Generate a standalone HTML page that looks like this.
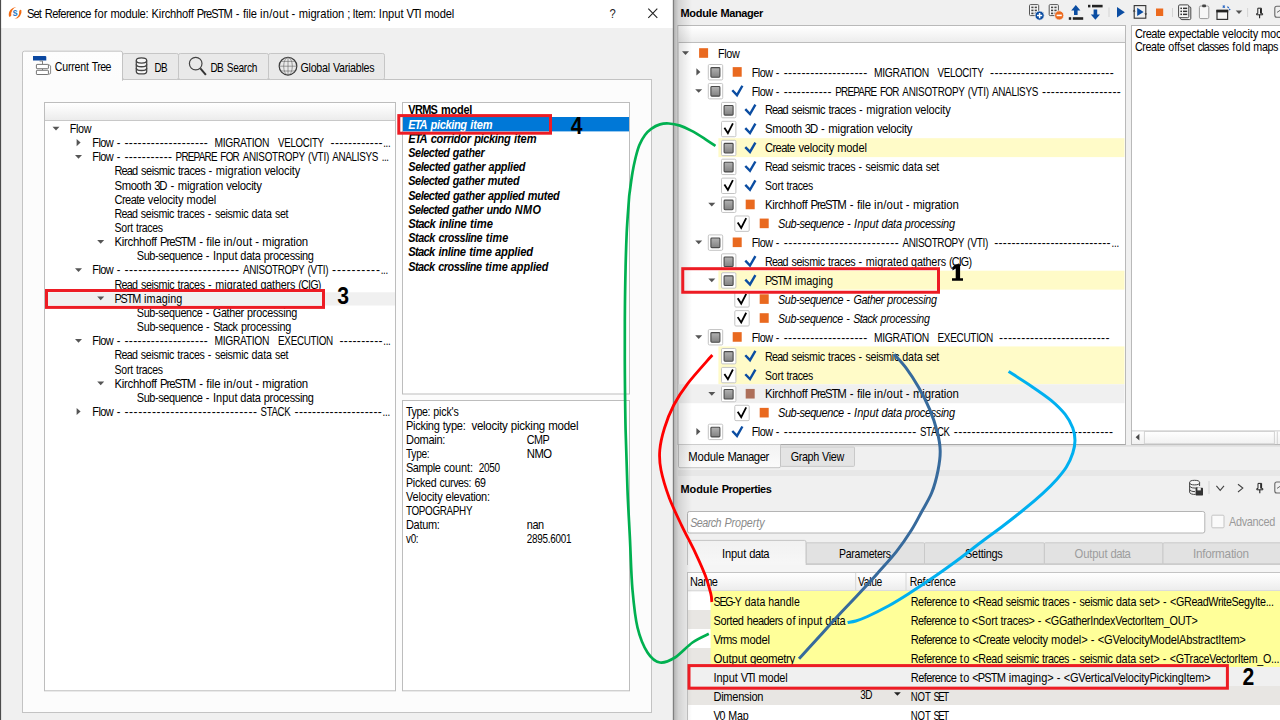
<!DOCTYPE html>
<html lang="en"><head><meta charset="utf-8"><title>Set Reference - Module Manager</title>
<style>
html,body{margin:0;padding:0;background:#f0f0f0;overflow:hidden}
body{width:1280px;height:720px;font-family:"Liberation Sans",sans-serif}
svg{display:block;position:absolute;left:0;top:0}
svg text{font-family:"Liberation Sans",sans-serif;white-space:pre}
</style></head><body>
<svg width="1280" height="720" viewBox="0 0 1280 720">
<defs>
<linearGradient id="ghead" x1="0" y1="0" x2="0" y2="1"><stop offset="0" stop-color="#ffffff"/><stop offset="0.45" stop-color="#f7f7f7"/><stop offset="1" stop-color="#ececec"/></linearGradient>
<linearGradient id="gtab" x1="0" y1="0" x2="0" y2="1"><stop offset="0" stop-color="#fdfdfd"/><stop offset="1" stop-color="#fcfcfc"/></linearGradient>
<linearGradient id="gtab2" x1="0" y1="0" x2="0" y2="1"><stop offset="0" stop-color="#f1f1f1"/><stop offset="1" stop-color="#f7f7f7"/></linearGradient>
<linearGradient id="gsb" x1="0" y1="0" x2="0" y2="1"><stop offset="0" stop-color="#ffffff"/><stop offset="1" stop-color="#f1f1f1"/></linearGradient>
<linearGradient id="gtab3" x1="0" y1="0" x2="0" y2="1"><stop offset="0" stop-color="#f2f2f2"/><stop offset="1" stop-color="#fbfbfb"/></linearGradient>
<linearGradient id="gsq" x1="0" y1="0" x2="0" y2="1"><stop offset="0" stop-color="#b2b2b2"/><stop offset="1" stop-color="#828282"/></linearGradient>
<linearGradient id="gshadow" x1="0" y1="0" x2="1" y2="0"><stop offset="0" stop-color="#000" stop-opacity="0.24"/><stop offset="0.25" stop-color="#000" stop-opacity="0.12"/><stop offset="1" stop-color="#000" stop-opacity="0"/></linearGradient>
</defs>
<g id="base">
<rect x="0.00" y="0.00" width="1280.00" height="720.00" fill="#f0f0f0" />
<rect x="0.00" y="0.00" width="673.50" height="28.00" fill="#ffffff" />
<rect x="0.00" y="28.00" width="673.50" height="692.00" fill="#f0f0f0" />
<rect x="0.00" y="0.00" width="1.10" height="720.00" fill="#4c4c4c" />
<path d="M9.0 16.4A7.2 7.2 0 0 1 16.2 7.3A6.0 7.0 0 0 0 11.3 15.4Q10.0 17.2 9.0 16.4z" fill="#f26a10" />
<path d="M21.4 10.2A7.2 7.2 0 0 1 14.4 18.8A6.0 7.0 0 0 0 19.2 11.0Q20.4 9.2 21.4 10.2z" fill="#f26a10" />
<text transform="translate(12.60 15.90) scale(0.9000 1)" font-size="10.5" font-weight="bold" fill="#2b7bc4">s</text>
<text transform="translate(27.00 17.60) scale(0.9296 1)" font-size="12" textLength="15.96" lengthAdjust="spacing">Set</text><text transform="translate(44.75 17.60) scale(0.9296 1)" font-size="12" textLength="50.17" lengthAdjust="spacing">Reference</text><text transform="translate(94.31 17.60) scale(0.9296 1)" font-size="12" textLength="14.28" lengthAdjust="spacing">for</text><text transform="translate(110.51 17.60) scale(0.9296 1)" font-size="12" textLength="41.05" lengthAdjust="spacing">module:</text><text transform="translate(151.59 17.60) scale(0.9296 1)" font-size="12" textLength="45.55" lengthAdjust="spacing">Kirchhoff</text><text transform="translate(196.85 17.60) scale(0.9296 1)" font-size="12" textLength="38.77" lengthAdjust="spacing">PreSTM</text><text transform="translate(235.81 17.60) scale(0.9296 1)" font-size="12">-</text><text transform="translate(242.99 17.60) scale(0.9296 1)" font-size="12" textLength="15.13" lengthAdjust="spacing">file</text><text transform="translate(259.97 17.60) scale(0.9296 1)" font-size="12" textLength="30.80" lengthAdjust="spacing">in/out</text><text transform="translate(291.52 17.60) scale(0.9296 1)" font-size="12">-</text><text transform="translate(298.70 17.60) scale(0.9296 1)" font-size="12" textLength="49.05" lengthAdjust="spacing">migration</text><text transform="translate(347.21 17.60) scale(0.9296 1)" font-size="12">;</text><text transform="translate(352.44 17.60) scale(0.9296 1)" font-size="12" textLength="25.27" lengthAdjust="spacing">Item:</text><text transform="translate(378.84 17.60) scale(0.9296 1)" font-size="12" textLength="26.64" lengthAdjust="spacing">Input</text><text transform="translate(406.52 17.60) scale(0.9296 1)" font-size="12" textLength="16.17" lengthAdjust="spacing">VTI</text><text transform="translate(424.47 17.60) scale(0.9296 1)" font-size="12" textLength="32.09" lengthAdjust="spacing">model</text>
<text transform="translate(609.60 17.60) scale(0.9000 1)" font-size="12.5" fill="#222">?</text>
<path d="M648.3 8.6l9 9.2M657.3 8.6l-9 9.2" fill="none" stroke="#222" stroke-width="1.1" />
<rect x="22.50" y="79.50" width="629.00" height="633.00" fill="#fcfcfc" stroke="#c3c3c3" stroke-width="1" />
<rect x="122.50" y="53.50" width="56.00" height="26.00" fill="#e9e9e9" stroke="#c6c6c6" stroke-width="1" rx="1.8" />
<rect x="178.50" y="53.50" width="90.00" height="26.00" fill="#e9e9e9" stroke="#c6c6c6" stroke-width="1" rx="1.8" />
<rect x="268.50" y="53.50" width="116.00" height="26.00" fill="#e9e9e9" stroke="#c6c6c6" stroke-width="1" rx="1.8" />
<path d="M22.5 80.5V53q0 -1.8 1.8 -1.8H120.7q1.8 0 1.8 1.8V80.5z" fill="url(#gtab)" stroke="#c3c3c3" stroke-width="1" />
<rect x="23.00" y="79.00" width="99.00" height="2.20" fill="#fcfcfc" />
<path d="M33 56h12.2q1.1 0 1.1 1.1v3.5h-13.3z" fill="#0a47a0" />
<path d="M39.6 61h2.9v3.2M42.5 68.6v1.8" fill="none" stroke="#808080" stroke-width="1" />
<path d="M48.4 64.4l2.2 1.5v7.6l-2.2 1.0" fill="none" stroke="#8a8a8a" stroke-width="1" />
<rect x="36.40" y="64.40" width="12.00" height="4.30" fill="#ffffff" stroke="#757575" stroke-width="1" rx="0.6" />
<rect x="36.40" y="70.30" width="12.00" height="4.20" fill="#ffffff" stroke="#757575" stroke-width="1" rx="0.6" />
<text transform="translate(54.80 70.80) scale(0.8814 1)" font-size="12" textLength="38.70" lengthAdjust="spacing">Current</text><text transform="translate(91.73 70.80) scale(0.8814 1)" font-size="12" textLength="22.43" lengthAdjust="spacing">Tree</text>
<path d="M136.3 60.5V71.4A5.2 2.6 0 0 0 146.7 71.4V60.5" fill="#f6f6f6" stroke="#444" stroke-width="1.25" />
<ellipse cx="141.5" cy="60.5" rx="5.2" ry="2.6" fill="#f6f6f6" stroke="#444" stroke-width="1.25"/>
<path d="M136.3 64.2A5.2 2.6 0 0 0 146.7 64.2M136.3 67.9A5.2 2.6 0 0 0 146.7 67.9" fill="none" stroke="#444" stroke-width="1.35" />
<text transform="translate(154.40 72.00) scale(0.8228 1)" font-size="12" textLength="15.92" lengthAdjust="spacing">DB</text>
<circle cx="195.7" cy="63.6" r="6.3" fill="none" stroke="#444" stroke-width="1.2"/>
<path d="M200.3 68.4l5.6 6.4" fill="none" stroke="#333" stroke-width="2" />
<text transform="translate(210.60 72.00) scale(0.8427 1)" font-size="12" textLength="15.74" lengthAdjust="spacing">DB</text><text transform="translate(226.72 72.00) scale(0.8427 1)" font-size="12" textLength="36.29" lengthAdjust="spacing">Search</text>
<circle cx="288" cy="66.2" r="8.8" fill="none" stroke="#3c3c3c" stroke-width="1.25"/>
<ellipse cx="288" cy="66.2" rx="4.3" ry="8.8" fill="none" stroke="#6c6c6c" stroke-width="0.65"/>
<path d="M279.3 66.2h17.4M288 57.4v17.6M280.8 61.4h14.4M280.8 71h14.4" fill="none" stroke="#6c6c6c" stroke-width="0.65" />
<text transform="translate(300.50 72.00) scale(0.8889 1)" font-size="12" textLength="33.30" lengthAdjust="spacing">Global</text><text transform="translate(332.94 72.00) scale(0.8889 1)" font-size="12" textLength="46.76" lengthAdjust="spacing">Variables</text>
<rect x="44.50" y="102.50" width="351.00" height="588.30" fill="#ffffff" stroke="#bdbdbd" stroke-width="1" />
<rect x="45.00" y="103.00" width="350.00" height="17.00" fill="url(#ghead)" />
<line x1="45.00" y1="120.50" x2="395.00" y2="120.50" stroke="#c8c8c8" stroke-width="1"/>
<rect x="45.00" y="292.30" width="350.00" height="13.20" fill="#f0f0f0" />
<path d="M52.50 126.70h7l-3.5 3.7z" fill="#555555" />
<text transform="translate(69.75 132.90) scale(0.9028 1)" font-size="12" textLength="24.20" lengthAdjust="spacing">Flow</text>
<path d="M76.60 138.95l4 3.6l-4 3.6z" fill="#555555" />
<text transform="translate(92.25 147.05) scale(0.9182 1)" font-size="12" textLength="23.44" lengthAdjust="spacing">Flow</text><text transform="translate(116.67 147.05) scale(0.9182 1)" font-size="12">-</text>
<text transform="translate(124.40 147.05) scale(1.0000 1)" font-size="12" textLength="83.40" lengthAdjust="spacing">-------------------</text>
<text transform="translate(214.40 147.05) scale(0.8582 1)" font-size="12" textLength="64.09" lengthAdjust="spacing">MIGRATION</text>
<text transform="translate(278.10 147.05) scale(0.8097 1)" font-size="12" textLength="56.69" lengthAdjust="spacing">VELOCITY</text>
<text transform="translate(330.60 147.05) scale(1.0000 1)" font-size="12" textLength="52.00" lengthAdjust="spacing">------------</text>
<text transform="translate(383.30 147.05) scale(0.8000 1)" font-size="12" textLength="9.13" lengthAdjust="spacing">...</text>
<path d="M75.00 155.01h7l-3.5 3.7z" fill="#555555" />
<text transform="translate(92.25 161.21) scale(0.9182 1)" font-size="12" textLength="23.44" lengthAdjust="spacing">Flow</text><text transform="translate(116.67 161.21) scale(0.9182 1)" font-size="12">-</text>
<text transform="translate(124.40 161.21) scale(1.0000 1)" font-size="12" textLength="47.60" lengthAdjust="spacing">-----------</text>
<text transform="translate(175.60 161.21) scale(0.8243 1)" font-size="12" textLength="50.80" lengthAdjust="spacing">PREPARE</text><text transform="translate(220.36 161.21) scale(0.8243 1)" font-size="12" textLength="23.52" lengthAdjust="spacing">FOR</text><text transform="translate(242.64 161.21) scale(0.8243 1)" font-size="12" textLength="75.84" lengthAdjust="spacing">ANISOTROPY</text><text transform="translate(308.03 161.21) scale(0.8243 1)" font-size="12" textLength="25.75" lengthAdjust="spacing">(VTI)</text><text transform="translate(332.15 161.21) scale(0.8243 1)" font-size="12" textLength="56.11" lengthAdjust="spacing">ANALISYS</text>
<text transform="translate(381.80 161.21) scale(0.8000 1)" font-size="12" textLength="9.00" lengthAdjust="spacing">...</text>
<text transform="translate(114.50 175.36) scale(0.9198 1)" font-size="12" textLength="25.74" lengthAdjust="spacing">Read</text><text transform="translate(141.09 175.36) scale(0.9198 1)" font-size="12" textLength="36.86" lengthAdjust="spacing">seismic</text><text transform="translate(177.92 175.36) scale(0.9198 1)" font-size="12" textLength="30.20" lengthAdjust="spacing">traces</text><text transform="translate(208.62 175.36) scale(0.9198 1)" font-size="12">-</text><text transform="translate(215.81 175.36) scale(0.9198 1)" font-size="12" textLength="49.64" lengthAdjust="spacing">migration</text><text transform="translate(264.39 175.36) scale(0.9198 1)" font-size="12" textLength="38.93" lengthAdjust="spacing">velocity</text>
<text transform="translate(114.50 189.52) scale(0.9446 1)" font-size="12" textLength="39.10" lengthAdjust="spacing">Smooth</text><text transform="translate(154.35 189.52) scale(0.9446 1)" font-size="12" textLength="13.98" lengthAdjust="spacing">3D</text><text transform="translate(170.47 189.52) scale(0.9446 1)" font-size="12">-</text><text transform="translate(177.65 189.52) scale(0.9446 1)" font-size="12" textLength="48.26" lengthAdjust="spacing">migration</text><text transform="translate(226.15 189.52) scale(0.9446 1)" font-size="12" textLength="37.85" lengthAdjust="spacing">velocity</text>
<text transform="translate(114.50 203.67) scale(0.9238 1)" font-size="12" textLength="32.95" lengthAdjust="spacing">Create</text><text transform="translate(147.86 203.67) scale(0.9238 1)" font-size="12" textLength="38.67" lengthAdjust="spacing">velocity</text><text transform="translate(186.50 203.67) scale(0.9238 1)" font-size="12" textLength="32.26" lengthAdjust="spacing">model</text>
<text transform="translate(114.50 217.83) scale(0.8899 1)" font-size="12" textLength="26.37" lengthAdjust="spacing">Read</text><text transform="translate(140.86 217.83) scale(0.8899 1)" font-size="12" textLength="37.76" lengthAdjust="spacing">seismic</text><text transform="translate(177.37 217.83) scale(0.8899 1)" font-size="12" textLength="30.95" lengthAdjust="spacing">traces</text><text transform="translate(207.80 217.83) scale(0.8899 1)" font-size="12">-</text><text transform="translate(214.93 217.83) scale(0.8899 1)" font-size="12" textLength="37.76" lengthAdjust="spacing">seismic</text><text transform="translate(251.43 217.83) scale(0.8899 1)" font-size="12" textLength="23.11" lengthAdjust="spacing">data</text><text transform="translate(274.90 217.83) scale(0.8899 1)" font-size="12" textLength="15.28" lengthAdjust="spacing">set</text>
<text transform="translate(114.50 231.98) scale(0.8769 1)" font-size="12" textLength="21.35" lengthAdjust="spacing">Sort</text><text transform="translate(136.06 231.98) scale(0.8769 1)" font-size="12" textLength="30.83" lengthAdjust="spacing">traces</text>
<path d="M97.20 239.94h7l-3.5 3.7z" fill="#555555" />
<text transform="translate(114.50 246.14) scale(0.9514 1)" font-size="12" textLength="44.74" lengthAdjust="spacing">Kirchhoff</text><text transform="translate(160.00 246.14) scale(0.9514 1)" font-size="12" textLength="38.07" lengthAdjust="spacing">PreSTM</text><text transform="translate(199.16 246.14) scale(0.9514 1)" font-size="12">-</text><text transform="translate(206.37 246.14) scale(0.9514 1)" font-size="12" textLength="14.86" lengthAdjust="spacing">file</text><text transform="translate(223.44 246.14) scale(0.9514 1)" font-size="12" textLength="30.25" lengthAdjust="spacing">in/out</text><text transform="translate(255.15 246.14) scale(0.9514 1)" font-size="12">-</text><text transform="translate(262.37 246.14) scale(0.9514 1)" font-size="12" textLength="48.17" lengthAdjust="spacing">migration</text>
<text transform="translate(136.80 260.29) scale(0.9149 1)" font-size="12" textLength="72.27" lengthAdjust="spacing">Sub-sequence</text><text transform="translate(205.81 260.29) scale(0.9149 1)" font-size="12">-</text><text transform="translate(212.93 260.29) scale(0.9149 1)" font-size="12" textLength="26.84" lengthAdjust="spacing">Input</text><text transform="translate(240.37 260.29) scale(0.9149 1)" font-size="12" textLength="22.46" lengthAdjust="spacing">data</text><text transform="translate(263.81 260.29) scale(0.9149 1)" font-size="12" textLength="54.86" lengthAdjust="spacing">processing</text>
<path d="M75.00 268.25h7l-3.5 3.7z" fill="#555555" />
<text transform="translate(92.25 274.45) scale(0.9182 1)" font-size="12" textLength="23.44" lengthAdjust="spacing">Flow</text><text transform="translate(116.67 274.45) scale(0.9182 1)" font-size="12">-</text>
<text transform="translate(124.40 274.45) scale(1.0000 1)" font-size="12" textLength="114.60" lengthAdjust="spacing">-------------------------</text>
<text transform="translate(243.00 274.45) scale(0.8254 1)" font-size="12" textLength="74.75" lengthAdjust="spacing">ANISOTROPY</text><text transform="translate(307.55 274.45) scale(0.8254 1)" font-size="12" textLength="25.39" lengthAdjust="spacing">(VTI)</text>
<text transform="translate(332.00 274.45) scale(1.0000 1)" font-size="12" textLength="48.00" lengthAdjust="spacing">----------</text>
<text transform="translate(380.70 274.45) scale(0.8000 1)" font-size="12" textLength="9.38" lengthAdjust="spacing">...</text>
<text transform="translate(114.50 288.60) scale(0.8970 1)" font-size="12" textLength="26.22" lengthAdjust="spacing">Read</text><text transform="translate(140.92 288.60) scale(0.8970 1)" font-size="12" textLength="37.55" lengthAdjust="spacing">seismic</text><text transform="translate(177.50 288.60) scale(0.8970 1)" font-size="12" textLength="30.77" lengthAdjust="spacing">traces</text><text transform="translate(208.00 288.60) scale(0.8970 1)" font-size="12">-</text><text transform="translate(215.14 288.60) scale(0.8970 1)" font-size="12" textLength="47.24" lengthAdjust="spacing">migrated</text><text transform="translate(260.42 288.60) scale(0.8970 1)" font-size="12" textLength="38.95" lengthAdjust="spacing">gathers</text><text transform="translate(298.26 288.60) scale(0.8970 1)" font-size="12" textLength="25.69" lengthAdjust="spacing">(CIG)</text>
<path d="M97.20 296.56h7l-3.5 3.7z" fill="#555555" />
<text transform="translate(114.50 302.76) scale(0.9021 1)" font-size="12" textLength="29.58" lengthAdjust="spacing">PSTM</text><text transform="translate(144.10 302.76) scale(0.9021 1)" font-size="12" textLength="42.35" lengthAdjust="spacing">imaging</text>
<text transform="translate(136.80 316.91) scale(0.9025 1)" font-size="12" textLength="73.18" lengthAdjust="spacing">Sub-sequence</text><text transform="translate(205.74 316.91) scale(0.9025 1)" font-size="12">-</text><text transform="translate(212.85 316.91) scale(0.9025 1)" font-size="12" textLength="34.72" lengthAdjust="spacing">Gather</text><text transform="translate(247.07 316.91) scale(0.9025 1)" font-size="12" textLength="55.55" lengthAdjust="spacing">processing</text>
<text transform="translate(136.80 331.07) scale(0.9016 1)" font-size="12" textLength="73.62" lengthAdjust="spacing">Sub-sequence</text><text transform="translate(206.08 331.07) scale(0.9016 1)" font-size="12">-</text><text transform="translate(213.23 331.07) scale(0.9016 1)" font-size="12" textLength="27.49" lengthAdjust="spacing">Stack</text><text transform="translate(240.91 331.07) scale(0.9016 1)" font-size="12" textLength="55.88" lengthAdjust="spacing">processing</text>
<path d="M75.00 339.02h7l-3.5 3.7z" fill="#555555" />
<text transform="translate(92.25 345.22) scale(0.9182 1)" font-size="12" textLength="23.44" lengthAdjust="spacing">Flow</text><text transform="translate(116.67 345.22) scale(0.9182 1)" font-size="12">-</text>
<text transform="translate(124.40 345.22) scale(1.0000 1)" font-size="12" textLength="83.40" lengthAdjust="spacing">-------------------</text>
<text transform="translate(214.40 345.22) scale(0.8582 1)" font-size="12" textLength="64.09" lengthAdjust="spacing">MIGRATION</text>
<text transform="translate(278.10 345.22) scale(0.8240 1)" font-size="12" textLength="66.86" lengthAdjust="spacing">EXECUTION</text>
<text transform="translate(339.50 345.22) scale(1.0000 1)" font-size="12" textLength="43.00" lengthAdjust="spacing">----------</text>
<text transform="translate(383.20 345.22) scale(0.8000 1)" font-size="12" textLength="9.50" lengthAdjust="spacing">...</text>
<text transform="translate(114.50 359.38) scale(0.8899 1)" font-size="12" textLength="26.37" lengthAdjust="spacing">Read</text><text transform="translate(140.86 359.38) scale(0.8899 1)" font-size="12" textLength="37.76" lengthAdjust="spacing">seismic</text><text transform="translate(177.37 359.38) scale(0.8899 1)" font-size="12" textLength="30.95" lengthAdjust="spacing">traces</text><text transform="translate(207.80 359.38) scale(0.8899 1)" font-size="12">-</text><text transform="translate(214.93 359.38) scale(0.8899 1)" font-size="12" textLength="37.76" lengthAdjust="spacing">seismic</text><text transform="translate(251.43 359.38) scale(0.8899 1)" font-size="12" textLength="23.11" lengthAdjust="spacing">data</text><text transform="translate(274.90 359.38) scale(0.8899 1)" font-size="12" textLength="15.28" lengthAdjust="spacing">set</text>
<text transform="translate(114.50 373.53) scale(0.8769 1)" font-size="12" textLength="21.35" lengthAdjust="spacing">Sort</text><text transform="translate(136.06 373.53) scale(0.8769 1)" font-size="12" textLength="30.83" lengthAdjust="spacing">traces</text>
<path d="M97.20 381.49h7l-3.5 3.7z" fill="#555555" />
<text transform="translate(114.50 387.69) scale(0.9514 1)" font-size="12" textLength="44.74" lengthAdjust="spacing">Kirchhoff</text><text transform="translate(160.00 387.69) scale(0.9514 1)" font-size="12" textLength="38.07" lengthAdjust="spacing">PreSTM</text><text transform="translate(199.16 387.69) scale(0.9514 1)" font-size="12">-</text><text transform="translate(206.37 387.69) scale(0.9514 1)" font-size="12" textLength="14.86" lengthAdjust="spacing">file</text><text transform="translate(223.44 387.69) scale(0.9514 1)" font-size="12" textLength="30.25" lengthAdjust="spacing">in/out</text><text transform="translate(255.15 387.69) scale(0.9514 1)" font-size="12">-</text><text transform="translate(262.37 387.69) scale(0.9514 1)" font-size="12" textLength="48.17" lengthAdjust="spacing">migration</text>
<text transform="translate(136.80 401.84) scale(0.9149 1)" font-size="12" textLength="72.27" lengthAdjust="spacing">Sub-sequence</text><text transform="translate(205.81 401.84) scale(0.9149 1)" font-size="12">-</text><text transform="translate(212.93 401.84) scale(0.9149 1)" font-size="12" textLength="26.84" lengthAdjust="spacing">Input</text><text transform="translate(240.37 401.84) scale(0.9149 1)" font-size="12" textLength="22.46" lengthAdjust="spacing">data</text><text transform="translate(263.81 401.84) scale(0.9149 1)" font-size="12" textLength="54.86" lengthAdjust="spacing">processing</text>
<path d="M76.60 407.90l4 3.6l-4 3.6z" fill="#555555" />
<text transform="translate(92.25 416.00) scale(0.9182 1)" font-size="12" textLength="23.44" lengthAdjust="spacing">Flow</text><text transform="translate(116.67 416.00) scale(0.9182 1)" font-size="12">-</text>
<text transform="translate(124.40 416.00) scale(1.0000 1)" font-size="12" textLength="132.60" lengthAdjust="spacing">-----------------------------</text>
<text transform="translate(260.60 416.00) scale(0.8029 1)" font-size="12" textLength="37.36" lengthAdjust="spacing">STACK</text>
<text transform="translate(294.50 416.00) scale(1.0000 1)" font-size="12" textLength="87.30" lengthAdjust="spacing">--------------------</text>
<text transform="translate(382.50 416.00) scale(0.8050 1)" font-size="12" textLength="9.56" lengthAdjust="spacing">...</text>
<rect x="402.50" y="102.50" width="227.00" height="291.50" fill="#ffffff" stroke="#bdbdbd" stroke-width="1" />
<rect x="403.00" y="117.00" width="226.00" height="14.40" fill="#0078d7" />
<text transform="translate(408.30 114.10) scale(0.9137 1)" font-size="12" font-weight="bold" textLength="32.42" lengthAdjust="spacing">VRMS</text><text transform="translate(440.98 114.10) scale(0.9137 1)" font-size="12" font-weight="bold" textLength="34.27" lengthAdjust="spacing">model</text>
<text transform="translate(408.30 128.60) scale(0.9204 1)" font-size="12" font-weight="bold" font-style="italic" fill="#fff" textLength="20.83" lengthAdjust="spacing">ETA</text><text transform="translate(430.61 128.60) scale(0.9204 1)" font-size="12" font-weight="bold" font-style="italic" fill="#fff" textLength="39.62" lengthAdjust="spacing">picking</text><text transform="translate(470.21 128.60) scale(0.9204 1)" font-size="12" font-weight="bold" font-style="italic" fill="#fff" textLength="24.43" lengthAdjust="spacing">item</text>
<text transform="translate(408.30 142.80) scale(0.9235 1)" font-size="12" font-weight="bold" font-style="italic" textLength="20.84" lengthAdjust="spacing">ETA</text><text transform="translate(430.70 142.80) scale(0.9235 1)" font-size="12" font-weight="bold" font-style="italic" textLength="43.65" lengthAdjust="spacing">corridor</text><text transform="translate(474.16 142.80) scale(0.9235 1)" font-size="12" font-weight="bold" font-style="italic" textLength="39.65" lengthAdjust="spacing">picking</text><text transform="translate(513.92 142.80) scale(0.9235 1)" font-size="12" font-weight="bold" font-style="italic" textLength="24.45" lengthAdjust="spacing">item</text>
<text transform="translate(408.30 157.00) scale(0.8963 1)" font-size="12" font-weight="bold" font-style="italic" textLength="46.30" lengthAdjust="spacing">Selected</text><text transform="translate(452.85 157.00) scale(0.8963 1)" font-size="12" font-weight="bold" font-style="italic" textLength="35.65" lengthAdjust="spacing">gather</text>
<text transform="translate(408.30 171.20) scale(0.9102 1)" font-size="12" font-weight="bold" font-style="italic" textLength="46.01" lengthAdjust="spacing">Selected</text><text transform="translate(453.26 171.20) scale(0.9102 1)" font-size="12" font-weight="bold" font-style="italic" textLength="35.43" lengthAdjust="spacing">gather</text><text transform="translate(488.58 171.20) scale(0.9102 1)" font-size="12" font-weight="bold" font-style="italic" textLength="40.46" lengthAdjust="spacing">applied</text>
<text transform="translate(408.30 185.40) scale(0.9055 1)" font-size="12" font-weight="bold" font-style="italic" textLength="45.73" lengthAdjust="spacing">Selected</text><text transform="translate(452.75 185.40) scale(0.9055 1)" font-size="12" font-weight="bold" font-style="italic" textLength="35.21" lengthAdjust="spacing">gather</text><text transform="translate(487.67 185.40) scale(0.9055 1)" font-size="12" font-weight="bold" font-style="italic" textLength="35.26" lengthAdjust="spacing">muted</text>
<text transform="translate(408.30 199.60) scale(0.9115 1)" font-size="12" font-weight="bold" font-style="italic" textLength="45.66" lengthAdjust="spacing">Selected</text><text transform="translate(452.97 199.60) scale(0.9115 1)" font-size="12" font-weight="bold" font-style="italic" textLength="35.15" lengthAdjust="spacing">gather</text><text transform="translate(488.07 199.60) scale(0.9115 1)" font-size="12" font-weight="bold" font-style="italic" textLength="40.14" lengthAdjust="spacing">applied</text><text transform="translate(527.71 199.60) scale(0.9115 1)" font-size="12" font-weight="bold" font-style="italic" textLength="35.20" lengthAdjust="spacing">muted</text>
<text transform="translate(408.30 213.80) scale(0.9061 1)" font-size="12" font-weight="bold" font-style="italic" textLength="45.05" lengthAdjust="spacing">Selected</text><text transform="translate(452.11 213.80) scale(0.9061 1)" font-size="12" font-weight="bold" font-style="italic" textLength="34.68" lengthAdjust="spacing">gather</text><text transform="translate(486.53 213.80) scale(0.9061 1)" font-size="12" font-weight="bold" font-style="italic" textLength="27.85" lengthAdjust="spacing">undo</text><text transform="translate(514.76 213.80) scale(0.9061 1)" font-size="12" font-weight="bold" font-style="italic" textLength="28.97" lengthAdjust="spacing">NMO</text>
<text transform="translate(408.30 228.00) scale(0.9365 1)" font-size="12" font-weight="bold" font-style="italic" textLength="29.24" lengthAdjust="spacing">Stack</text><text transform="translate(438.89 228.00) scale(0.9365 1)" font-size="12" font-weight="bold" font-style="italic" textLength="29.78" lengthAdjust="spacing">inline</text><text transform="translate(469.99 228.00) scale(0.9365 1)" font-size="12" font-weight="bold" font-style="italic" textLength="24.57" lengthAdjust="spacing">time</text>
<text transform="translate(408.30 242.20) scale(0.9022 1)" font-size="12" font-weight="bold" font-style="italic" textLength="29.89" lengthAdjust="spacing">Stack</text><text transform="translate(438.43 242.20) scale(0.9022 1)" font-size="12" font-weight="bold" font-style="italic" textLength="48.82" lengthAdjust="spacing">crossline</text><text transform="translate(485.64 242.20) scale(0.9022 1)" font-size="12" font-weight="bold" font-style="italic" textLength="25.12" lengthAdjust="spacing">time</text>
<text transform="translate(408.30 256.40) scale(0.9324 1)" font-size="12" font-weight="bold" font-style="italic" textLength="28.98" lengthAdjust="spacing">Stack</text><text transform="translate(438.49 256.40) scale(0.9324 1)" font-size="12" font-weight="bold" font-style="italic" textLength="29.53" lengthAdjust="spacing">inline</text><text transform="translate(469.19 256.40) scale(0.9324 1)" font-size="12" font-weight="bold" font-style="italic" textLength="24.36" lengthAdjust="spacing">time</text><text transform="translate(495.07 256.40) scale(0.9324 1)" font-size="12" font-weight="bold" font-style="italic" textLength="40.68" lengthAdjust="spacing">applied</text>
<text transform="translate(408.30 270.60) scale(0.9095 1)" font-size="12" font-weight="bold" font-style="italic" textLength="29.48" lengthAdjust="spacing">Stack</text><text transform="translate(438.26 270.60) scale(0.9095 1)" font-size="12" font-weight="bold" font-style="italic" textLength="48.15" lengthAdjust="spacing">crossline</text><text transform="translate(485.19 270.60) scale(0.9095 1)" font-size="12" font-weight="bold" font-style="italic" textLength="24.77" lengthAdjust="spacing">time</text><text transform="translate(510.87 270.60) scale(0.9095 1)" font-size="12" font-weight="bold" font-style="italic" textLength="41.38" lengthAdjust="spacing">applied</text>
<rect x="402.50" y="400.50" width="227.00" height="290.30" fill="#ffffff" stroke="#bdbdbd" stroke-width="1" />
<text transform="translate(406.00 415.70) scale(0.8870 1)" font-size="12" textLength="27.54" lengthAdjust="spacing">Type:</text><text transform="translate(433.30 415.70) scale(0.8870 1)" font-size="12" textLength="28.75" lengthAdjust="spacing">pick's</text>
<text transform="translate(406.00 429.88) scale(0.9202 1)" font-size="12" textLength="36.76" lengthAdjust="spacing">Picking</text><text transform="translate(442.76 429.88) scale(0.9202 1)" font-size="12" textLength="25.03" lengthAdjust="spacing">type:</text>
<text transform="translate(471.50 429.88) scale(0.9599 1)" font-size="12" textLength="37.83" lengthAdjust="spacing">velocity</text><text transform="translate(510.78 429.88) scale(0.9599 1)" font-size="12" textLength="35.90" lengthAdjust="spacing">picking</text><text transform="translate(548.21 429.88) scale(0.9599 1)" font-size="12" textLength="31.56" lengthAdjust="spacing">model</text>
<text transform="translate(406.00 444.06) scale(0.9209 1)" font-size="12" textLength="42.68" lengthAdjust="spacing">Domain:</text>
<text transform="translate(526.80 444.06) scale(0.8990 1)" font-size="12" textLength="25.47" lengthAdjust="spacing">CMP</text>
<text transform="translate(406.00 458.24) scale(0.8453 1)" font-size="12" textLength="28.04" lengthAdjust="spacing">Type:</text>
<text transform="translate(526.80 458.24) scale(0.9424 1)" font-size="12" textLength="26.74" lengthAdjust="spacing">NMO</text>
<text transform="translate(406.00 472.42) scale(0.9145 1)" font-size="12" textLength="38.06" lengthAdjust="spacing">Sample</text><text transform="translate(443.73 472.42) scale(0.9145 1)" font-size="12" textLength="32.00" lengthAdjust="spacing">count:</text>
<text transform="translate(478.70 472.42) scale(0.8352 1)" font-size="12" textLength="25.50" lengthAdjust="spacing">2050</text>
<text transform="translate(406.00 486.60) scale(0.8833 1)" font-size="12" textLength="34.57" lengthAdjust="spacing">Picked</text><text transform="translate(439.45 486.60) scale(0.8833 1)" font-size="12" textLength="36.32" lengthAdjust="spacing">curves:</text><text transform="translate(474.44 486.60) scale(0.8833 1)" font-size="12" textLength="12.97" lengthAdjust="spacing">69</text>
<text transform="translate(406.00 500.78) scale(0.9156 1)" font-size="12" textLength="40.13" lengthAdjust="spacing">Velocity</text><text transform="translate(445.62 500.78) scale(0.9156 1)" font-size="12" textLength="48.47" lengthAdjust="spacing">elevation:</text>
<text transform="translate(406.00 514.96) scale(0.8244 1)" font-size="12" textLength="80.67" lengthAdjust="spacing">TOPOGRAPHY</text>
<text transform="translate(406.00 529.14) scale(0.9175 1)" font-size="12" textLength="36.95" lengthAdjust="spacing">Datum:</text>
<text transform="translate(526.80 529.14) scale(0.9096 1)" font-size="12" textLength="19.13" lengthAdjust="spacing">nan</text>
<text transform="translate(406.00 543.32) scale(0.8238 1)" font-size="12" textLength="15.29" lengthAdjust="spacing">v0:</text>
<text transform="translate(526.80 543.32) scale(0.8269 1)" font-size="12" textLength="54.18" lengthAdjust="spacing">2895.6001</text>
<rect x="672.80" y="0.00" width="1.30" height="720.00" fill="#7f7f7f" />
<text transform="translate(680.50 17.10) scale(0.9556 1)" font-size="11.5" font-weight="bold" textLength="38.71" lengthAdjust="spacing">Module</text><text transform="translate(720.47 17.10) scale(0.9556 1)" font-size="11.5" font-weight="bold" textLength="44.82" lengthAdjust="spacing">Manager</text>
<rect x="678.00" y="25.50" width="447.50" height="419.00" fill="#ffffff" stroke="#b9b9b9" stroke-width="1" />
<rect x="678.50" y="26.00" width="446.50" height="16.50" fill="url(#ghead)" />
<line x1="678.50" y1="42.50" x2="1125.00" y2="42.50" stroke="#bdbdbd" stroke-width="1.2"/>
<rect x="718.40" y="138.19" width="406.10" height="18.93" fill="#fffbc8" />
<rect x="718.40" y="270.69" width="406.10" height="18.93" fill="#fffbc8" />
<rect x="718.40" y="346.42" width="406.10" height="37.86" fill="#fffbc8" />
<rect x="678.50" y="384.28" width="446.00" height="18.93" fill="#f0f0f0" />
<path d="M682.00 51.30h7l-3.5 3.7z" fill="#555555" />
<rect x="699.10" y="48.20" width="9.00" height="9.60" fill="#e9691f" />
<text transform="translate(718.00 57.70) scale(0.9007 1)" font-size="12" textLength="24.20" lengthAdjust="spacing">Flow</text>
<path d="M696.40 68.33l4 3.6l-4 3.6z" fill="#555555" />
<rect x="708.30" y="64.53" width="14.40" height="15.40" fill="#ffffff" stroke="#c4c4c4" stroke-width="1" rx="1.2" />
<rect x="710.90" y="67.63" width="9.00" height="9.60" fill="url(#gsq)" stroke="#4a4a4a" stroke-width="1.1" rx="0.9" />
<rect x="732.70" y="67.13" width="9.00" height="9.60" fill="#e9691f" />
<text transform="translate(751.80 76.63) scale(0.9038 1)" font-size="12" textLength="23.44" lengthAdjust="spacing">Flow</text><text transform="translate(775.84 76.63) scale(0.9038 1)" font-size="12">-</text>
<text transform="translate(783.70 76.63) scale(1.0000 1)" font-size="12" textLength="83.60" lengthAdjust="spacing">-------------------</text>
<text transform="translate(874.00 76.63) scale(0.8629 1)" font-size="12" textLength="64.09" lengthAdjust="spacing">MIGRATION</text>
<text transform="translate(937.50 76.63) scale(0.8150 1)" font-size="12" textLength="56.69" lengthAdjust="spacing">VELOCITY</text>
<text transform="translate(990.00 76.63) scale(1.0000 1)" font-size="12" textLength="123.80" lengthAdjust="spacing">----------------------------</text>
<path d="M695.20 89.16h7l-3.5 3.7z" fill="#555555" />
<rect x="708.30" y="83.46" width="14.40" height="15.40" fill="#ffffff" stroke="#c4c4c4" stroke-width="1" rx="1.2" />
<rect x="710.90" y="86.56" width="9.00" height="9.60" fill="url(#gsq)" stroke="#4a4a4a" stroke-width="1.1" rx="0.9" />
<path d="M732.30 90.26l4.7 4.9l5.4 -9.4" fill="none" stroke="#0b4da2" stroke-width="2.4" stroke-linecap="butt" stroke-linejoin="miter"/>
<text transform="translate(751.80 95.56) scale(0.9038 1)" font-size="12" textLength="23.44" lengthAdjust="spacing">Flow</text><text transform="translate(775.84 95.56) scale(0.9038 1)" font-size="12">-</text>
<text transform="translate(783.70 95.56) scale(1.0000 1)" font-size="12" textLength="47.80" lengthAdjust="spacing">-----------</text>
<text transform="translate(835.20 95.56) scale(0.8255 1)" font-size="12" textLength="50.80" lengthAdjust="spacing">PREPARE</text><text transform="translate(880.03 95.56) scale(0.8255 1)" font-size="12" textLength="23.52" lengthAdjust="spacing">FOR</text><text transform="translate(902.34 95.56) scale(0.8255 1)" font-size="12" textLength="75.84" lengthAdjust="spacing">ANISOTROPY</text><text transform="translate(967.83 95.56) scale(0.8255 1)" font-size="12" textLength="25.75" lengthAdjust="spacing">(VTI)</text><text transform="translate(991.98 95.56) scale(0.8255 1)" font-size="12" textLength="56.11" lengthAdjust="spacing">ANALISYS</text>
<text transform="translate(1042.00 95.56) scale(1.0000 1)" font-size="12" textLength="78.80" lengthAdjust="spacing">------------------</text>
<rect x="721.50" y="102.39" width="14.40" height="15.40" fill="#ffffff" stroke="#c4c4c4" stroke-width="1" rx="1.2" />
<rect x="724.10" y="105.49" width="9.00" height="9.60" fill="url(#gsq)" stroke="#4a4a4a" stroke-width="1.1" rx="0.9" />
<path d="M745.30 109.19l4.7 4.9l5.4 -9.4" fill="none" stroke="#0b4da2" stroke-width="2.4" stroke-linecap="butt" stroke-linejoin="miter"/>
<text transform="translate(765.00 114.49) scale(0.9198 1)" font-size="12" textLength="25.74" lengthAdjust="spacing">Read</text><text transform="translate(791.59 114.49) scale(0.9198 1)" font-size="12" textLength="36.86" lengthAdjust="spacing">seismic</text><text transform="translate(828.42 114.49) scale(0.9198 1)" font-size="12" textLength="30.20" lengthAdjust="spacing">traces</text><text transform="translate(859.12 114.49) scale(0.9198 1)" font-size="12">-</text><text transform="translate(866.31 114.49) scale(0.9198 1)" font-size="12" textLength="49.64" lengthAdjust="spacing">migration</text><text transform="translate(914.89 114.49) scale(0.9198 1)" font-size="12" textLength="38.93" lengthAdjust="spacing">velocity</text>
<rect x="721.50" y="121.32" width="14.40" height="15.40" fill="#ffffff" stroke="#c4c4c4" stroke-width="1" rx="1.2" />
<path d="M724.40 127.82l3.5 5.4l5.0 -9.8" fill="none" stroke="#000" stroke-width="1.8" stroke-linejoin="miter"/>
<path d="M745.30 128.12l4.7 4.9l5.4 -9.4" fill="none" stroke="#0b4da2" stroke-width="2.4" stroke-linecap="butt" stroke-linejoin="miter"/>
<text transform="translate(765.00 133.42) scale(0.9452 1)" font-size="12" textLength="39.10" lengthAdjust="spacing">Smooth</text><text transform="translate(804.87 133.42) scale(0.9452 1)" font-size="12" textLength="13.98" lengthAdjust="spacing">3D</text><text transform="translate(821.01 133.42) scale(0.9452 1)" font-size="12">-</text><text transform="translate(828.19 133.42) scale(0.9452 1)" font-size="12" textLength="48.26" lengthAdjust="spacing">migration</text><text transform="translate(876.73 133.42) scale(0.9452 1)" font-size="12" textLength="37.85" lengthAdjust="spacing">velocity</text>
<rect x="721.50" y="140.25" width="14.40" height="15.40" fill="#ffffff" stroke="#c4c4c4" stroke-width="1" rx="1.2" />
<rect x="724.10" y="143.35" width="9.00" height="9.60" fill="url(#gsq)" stroke="#4a4a4a" stroke-width="1.1" rx="0.9" />
<path d="M745.30 147.05l4.7 4.9l5.4 -9.4" fill="none" stroke="#0b4da2" stroke-width="2.4" stroke-linecap="butt" stroke-linejoin="miter"/>
<text transform="translate(765.00 152.35) scale(0.9256 1)" font-size="12" textLength="32.95" lengthAdjust="spacing">Create</text><text transform="translate(798.42 152.35) scale(0.9256 1)" font-size="12" textLength="38.67" lengthAdjust="spacing">velocity</text><text transform="translate(837.14 152.35) scale(0.9256 1)" font-size="12" textLength="32.26" lengthAdjust="spacing">model</text>
<rect x="721.50" y="159.18" width="14.40" height="15.40" fill="#ffffff" stroke="#c4c4c4" stroke-width="1" rx="1.2" />
<rect x="724.10" y="162.28" width="9.00" height="9.60" fill="url(#gsq)" stroke="#4a4a4a" stroke-width="1.1" rx="0.9" />
<path d="M745.30 165.98l4.7 4.9l5.4 -9.4" fill="none" stroke="#0b4da2" stroke-width="2.4" stroke-linecap="butt" stroke-linejoin="miter"/>
<text transform="translate(765.00 171.28) scale(0.8915 1)" font-size="12" textLength="26.37" lengthAdjust="spacing">Read</text><text transform="translate(791.41 171.28) scale(0.8915 1)" font-size="12" textLength="37.76" lengthAdjust="spacing">seismic</text><text transform="translate(827.98 171.28) scale(0.8915 1)" font-size="12" textLength="30.95" lengthAdjust="spacing">traces</text><text transform="translate(858.47 171.28) scale(0.8915 1)" font-size="12">-</text><text transform="translate(865.60 171.28) scale(0.8915 1)" font-size="12" textLength="37.76" lengthAdjust="spacing">seismic</text><text transform="translate(902.17 171.28) scale(0.8915 1)" font-size="12" textLength="23.11" lengthAdjust="spacing">data</text><text transform="translate(925.68 171.28) scale(0.8915 1)" font-size="12" textLength="15.28" lengthAdjust="spacing">set</text>
<rect x="721.50" y="178.11" width="14.40" height="15.40" fill="#ffffff" stroke="#c4c4c4" stroke-width="1" rx="1.2" />
<path d="M724.40 184.61l3.5 5.4l5.0 -9.8" fill="none" stroke="#000" stroke-width="1.8" stroke-linejoin="miter"/>
<path d="M745.30 184.91l4.7 4.9l5.4 -9.4" fill="none" stroke="#0b4da2" stroke-width="2.4" stroke-linecap="butt" stroke-linejoin="miter"/>
<text transform="translate(765.00 190.21) scale(0.8715 1)" font-size="12" textLength="21.35" lengthAdjust="spacing">Sort</text><text transform="translate(786.43 190.21) scale(0.8715 1)" font-size="12" textLength="30.83" lengthAdjust="spacing">traces</text>
<path d="M708.30 202.74h7l-3.5 3.7z" fill="#555555" />
<rect x="721.50" y="197.04" width="14.40" height="15.40" fill="#ffffff" stroke="#c4c4c4" stroke-width="1" rx="1.2" />
<rect x="724.10" y="200.14" width="9.00" height="9.60" fill="url(#gsq)" stroke="#4a4a4a" stroke-width="1.1" rx="0.9" />
<rect x="745.70" y="199.64" width="9.00" height="9.60" fill="#e9691f" />
<text transform="translate(765.00 209.14) scale(0.9519 1)" font-size="12" textLength="44.74" lengthAdjust="spacing">Kirchhoff</text><text transform="translate(810.52 209.14) scale(0.9519 1)" font-size="12" textLength="38.07" lengthAdjust="spacing">PreSTM</text><text transform="translate(849.70 209.14) scale(0.9519 1)" font-size="12">-</text><text transform="translate(856.92 209.14) scale(0.9519 1)" font-size="12" textLength="14.86" lengthAdjust="spacing">file</text><text transform="translate(874.00 209.14) scale(0.9519 1)" font-size="12" textLength="30.25" lengthAdjust="spacing">in/out</text><text transform="translate(905.72 209.14) scale(0.9519 1)" font-size="12">-</text><text transform="translate(912.94 209.14) scale(0.9519 1)" font-size="12" textLength="48.17" lengthAdjust="spacing">migration</text>
<rect x="734.80" y="215.97" width="14.40" height="15.40" fill="#ffffff" stroke="#c4c4c4" stroke-width="1" rx="1.2" />
<path d="M737.70 222.47l3.5 5.4l5.0 -9.8" fill="none" stroke="#000" stroke-width="1.8" stroke-linejoin="miter"/>
<rect x="759.70" y="218.57" width="9.00" height="9.60" fill="#e9691f" />
<text transform="translate(778.00 228.07) scale(0.9139 1)" font-size="12" font-style="italic" textLength="72.27" lengthAdjust="spacing">Sub-sequence</text><text transform="translate(846.93 228.07) scale(0.9139 1)" font-size="12" font-style="italic">-</text><text transform="translate(854.04 228.07) scale(0.9139 1)" font-size="12" font-style="italic" textLength="26.84" lengthAdjust="spacing">Input</text><text transform="translate(881.46 228.07) scale(0.9139 1)" font-size="12" font-style="italic" textLength="22.46" lengthAdjust="spacing">data</text><text transform="translate(904.87 228.07) scale(0.9139 1)" font-size="12" font-style="italic" textLength="54.86" lengthAdjust="spacing">processing</text>
<path d="M695.20 240.60h7l-3.5 3.7z" fill="#555555" />
<rect x="708.30" y="234.90" width="14.40" height="15.40" fill="#ffffff" stroke="#c4c4c4" stroke-width="1" rx="1.2" />
<rect x="710.90" y="238.00" width="9.00" height="9.60" fill="url(#gsq)" stroke="#4a4a4a" stroke-width="1.1" rx="0.9" />
<rect x="732.70" y="237.50" width="9.00" height="9.60" fill="#e9691f" />
<text transform="translate(751.80 247.00) scale(0.9038 1)" font-size="12" textLength="23.44" lengthAdjust="spacing">Flow</text><text transform="translate(775.84 247.00) scale(0.9038 1)" font-size="12">-</text>
<text transform="translate(783.70 247.00) scale(1.0000 1)" font-size="12" textLength="115.10" lengthAdjust="spacing">-------------------------</text>
<text transform="translate(902.50 247.00) scale(0.8292 1)" font-size="12" textLength="74.75" lengthAdjust="spacing">ANISOTROPY</text><text transform="translate(967.35 247.00) scale(0.8292 1)" font-size="12" textLength="25.39" lengthAdjust="spacing">(VTI)</text>
<text transform="translate(994.20 247.00) scale(1.0000 1)" font-size="12" textLength="116.40" lengthAdjust="spacing">---------------------------</text>
<text transform="translate(1111.60 247.00) scale(0.8000 1)" font-size="12" textLength="9.50" lengthAdjust="spacing">...</text>
<rect x="721.50" y="253.83" width="14.40" height="15.40" fill="#ffffff" stroke="#c4c4c4" stroke-width="1" rx="1.2" />
<rect x="724.10" y="256.93" width="9.00" height="9.60" fill="url(#gsq)" stroke="#4a4a4a" stroke-width="1.1" rx="0.9" />
<path d="M745.30 260.63l4.7 4.9l5.4 -9.4" fill="none" stroke="#0b4da2" stroke-width="2.4" stroke-linecap="butt" stroke-linejoin="miter"/>
<text transform="translate(765.00 265.93) scale(0.8979 1)" font-size="12" textLength="26.22" lengthAdjust="spacing">Read</text><text transform="translate(791.44 265.93) scale(0.8979 1)" font-size="12" textLength="37.55" lengthAdjust="spacing">seismic</text><text transform="translate(828.06 265.93) scale(0.8979 1)" font-size="12" textLength="30.77" lengthAdjust="spacing">traces</text><text transform="translate(858.59 265.93) scale(0.8979 1)" font-size="12">-</text><text transform="translate(865.74 265.93) scale(0.8979 1)" font-size="12" textLength="47.24" lengthAdjust="spacing">migrated</text><text transform="translate(911.06 265.93) scale(0.8979 1)" font-size="12" textLength="38.95" lengthAdjust="spacing">gathers</text><text transform="translate(948.94 265.93) scale(0.8979 1)" font-size="12" textLength="25.69" lengthAdjust="spacing">(CIG)</text>
<path d="M708.30 278.46h7l-3.5 3.7z" fill="#555555" />
<rect x="721.50" y="272.76" width="14.40" height="15.40" fill="#ffffff" stroke="#c4c4c4" stroke-width="1" rx="1.2" />
<rect x="724.10" y="275.86" width="9.00" height="9.60" fill="url(#gsq)" stroke="#4a4a4a" stroke-width="1.1" rx="0.9" />
<path d="M745.30 279.56l4.7 4.9l5.4 -9.4" fill="none" stroke="#0b4da2" stroke-width="2.4" stroke-linecap="butt" stroke-linejoin="miter"/>
<text transform="translate(765.00 284.86) scale(0.9047 1)" font-size="12" textLength="29.58" lengthAdjust="spacing">PSTM</text><text transform="translate(794.68 284.86) scale(0.9047 1)" font-size="12" textLength="42.35" lengthAdjust="spacing">imaging</text>
<rect x="734.80" y="291.69" width="14.40" height="15.40" fill="#ffffff" stroke="#c4c4c4" stroke-width="1" rx="1.2" />
<path d="M737.70 298.19l3.5 5.4l5.0 -9.8" fill="none" stroke="#000" stroke-width="1.8" stroke-linejoin="miter"/>
<rect x="759.70" y="294.29" width="9.00" height="9.60" fill="#e9691f" />
<text transform="translate(778.00 303.79) scale(0.8946 1)" font-size="12" font-style="italic" textLength="73.18" lengthAdjust="spacing">Sub-sequence</text><text transform="translate(846.33 303.79) scale(0.8946 1)" font-size="12" font-style="italic">-</text><text transform="translate(853.38 303.79) scale(0.8946 1)" font-size="12" font-style="italic" textLength="34.72" lengthAdjust="spacing">Gather</text><text transform="translate(887.30 303.79) scale(0.8946 1)" font-size="12" font-style="italic" textLength="55.55" lengthAdjust="spacing">processing</text>
<rect x="734.80" y="310.62" width="14.40" height="15.40" fill="#ffffff" stroke="#c4c4c4" stroke-width="1" rx="1.2" />
<path d="M737.70 317.12l3.5 5.4l5.0 -9.8" fill="none" stroke="#000" stroke-width="1.8" stroke-linejoin="miter"/>
<rect x="759.70" y="313.22" width="9.00" height="9.60" fill="#e9691f" />
<text transform="translate(778.00 322.72) scale(0.8870 1)" font-size="12" font-style="italic" textLength="73.62" lengthAdjust="spacing">Sub-sequence</text><text transform="translate(846.16 322.72) scale(0.8870 1)" font-size="12" font-style="italic">-</text><text transform="translate(853.19 322.72) scale(0.8870 1)" font-size="12" font-style="italic" textLength="27.49" lengthAdjust="spacing">Stack</text><text transform="translate(880.43 322.72) scale(0.8870 1)" font-size="12" font-style="italic" textLength="55.88" lengthAdjust="spacing">processing</text>
<path d="M695.20 335.25h7l-3.5 3.7z" fill="#555555" />
<rect x="708.30" y="329.55" width="14.40" height="15.40" fill="#ffffff" stroke="#c4c4c4" stroke-width="1" rx="1.2" />
<rect x="710.90" y="332.65" width="9.00" height="9.60" fill="url(#gsq)" stroke="#4a4a4a" stroke-width="1.1" rx="0.9" />
<rect x="732.70" y="332.15" width="9.00" height="9.60" fill="#e9691f" />
<text transform="translate(751.80 341.65) scale(0.9038 1)" font-size="12" textLength="23.44" lengthAdjust="spacing">Flow</text><text transform="translate(775.84 341.65) scale(0.9038 1)" font-size="12">-</text>
<text transform="translate(783.70 341.65) scale(1.0000 1)" font-size="12" textLength="83.60" lengthAdjust="spacing">-------------------</text>
<text transform="translate(874.00 341.65) scale(0.8629 1)" font-size="12" textLength="64.09" lengthAdjust="spacing">MIGRATION</text>
<text transform="translate(937.50 341.65) scale(0.8345 1)" font-size="12" textLength="66.86" lengthAdjust="spacing">EXECUTION</text>
<text transform="translate(999.00 341.65) scale(1.0000 1)" font-size="12" textLength="110.50" lengthAdjust="spacing">-------------------------</text>
<rect x="721.50" y="348.48" width="14.40" height="15.40" fill="#ffffff" stroke="#c4c4c4" stroke-width="1" rx="1.2" />
<rect x="724.10" y="351.58" width="9.00" height="9.60" fill="url(#gsq)" stroke="#4a4a4a" stroke-width="1.1" rx="0.9" />
<path d="M745.30 355.28l4.7 4.9l5.4 -9.4" fill="none" stroke="#0b4da2" stroke-width="2.4" stroke-linecap="butt" stroke-linejoin="miter"/>
<text transform="translate(765.00 360.58) scale(0.8915 1)" font-size="12" textLength="26.37" lengthAdjust="spacing">Read</text><text transform="translate(791.41 360.58) scale(0.8915 1)" font-size="12" textLength="37.76" lengthAdjust="spacing">seismic</text><text transform="translate(827.98 360.58) scale(0.8915 1)" font-size="12" textLength="30.95" lengthAdjust="spacing">traces</text><text transform="translate(858.47 360.58) scale(0.8915 1)" font-size="12">-</text><text transform="translate(865.60 360.58) scale(0.8915 1)" font-size="12" textLength="37.76" lengthAdjust="spacing">seismic</text><text transform="translate(902.17 360.58) scale(0.8915 1)" font-size="12" textLength="23.11" lengthAdjust="spacing">data</text><text transform="translate(925.68 360.58) scale(0.8915 1)" font-size="12" textLength="15.28" lengthAdjust="spacing">set</text>
<rect x="721.50" y="367.41" width="14.40" height="15.40" fill="#ffffff" stroke="#c4c4c4" stroke-width="1" rx="1.2" />
<path d="M724.40 373.91l3.5 5.4l5.0 -9.8" fill="none" stroke="#000" stroke-width="1.8" stroke-linejoin="miter"/>
<path d="M745.30 374.21l4.7 4.9l5.4 -9.4" fill="none" stroke="#0b4da2" stroke-width="2.4" stroke-linecap="butt" stroke-linejoin="miter"/>
<text transform="translate(765.00 379.51) scale(0.8715 1)" font-size="12" textLength="21.35" lengthAdjust="spacing">Sort</text><text transform="translate(786.43 379.51) scale(0.8715 1)" font-size="12" textLength="30.83" lengthAdjust="spacing">traces</text>
<path d="M708.30 392.04h7l-3.5 3.7z" fill="#555555" />
<rect x="721.50" y="386.34" width="14.40" height="15.40" fill="#ffffff" stroke="#c4c4c4" stroke-width="1" rx="1.2" />
<rect x="724.10" y="389.44" width="9.00" height="9.60" fill="url(#gsq)" stroke="#4a4a4a" stroke-width="1.1" rx="0.9" />
<rect x="745.70" y="388.94" width="9.00" height="9.60" fill="#ad6f5a" />
<text transform="translate(765.00 398.44) scale(0.9519 1)" font-size="12" textLength="44.74" lengthAdjust="spacing">Kirchhoff</text><text transform="translate(810.52 398.44) scale(0.9519 1)" font-size="12" textLength="38.07" lengthAdjust="spacing">PreSTM</text><text transform="translate(849.70 398.44) scale(0.9519 1)" font-size="12">-</text><text transform="translate(856.92 398.44) scale(0.9519 1)" font-size="12" textLength="14.86" lengthAdjust="spacing">file</text><text transform="translate(874.00 398.44) scale(0.9519 1)" font-size="12" textLength="30.25" lengthAdjust="spacing">in/out</text><text transform="translate(905.72 398.44) scale(0.9519 1)" font-size="12">-</text><text transform="translate(912.94 398.44) scale(0.9519 1)" font-size="12" textLength="48.17" lengthAdjust="spacing">migration</text>
<rect x="734.80" y="405.27" width="14.40" height="15.40" fill="#ffffff" stroke="#c4c4c4" stroke-width="1" rx="1.2" />
<path d="M737.70 411.77l3.5 5.4l5.0 -9.8" fill="none" stroke="#000" stroke-width="1.8" stroke-linejoin="miter"/>
<rect x="759.70" y="407.87" width="9.00" height="9.60" fill="#e9691f" />
<text transform="translate(778.00 417.37) scale(0.9139 1)" font-size="12" font-style="italic" textLength="72.27" lengthAdjust="spacing">Sub-sequence</text><text transform="translate(846.93 417.37) scale(0.9139 1)" font-size="12" font-style="italic">-</text><text transform="translate(854.04 417.37) scale(0.9139 1)" font-size="12" font-style="italic" textLength="26.84" lengthAdjust="spacing">Input</text><text transform="translate(881.46 417.37) scale(0.9139 1)" font-size="12" font-style="italic" textLength="22.46" lengthAdjust="spacing">data</text><text transform="translate(904.87 417.37) scale(0.9139 1)" font-size="12" font-style="italic" textLength="54.86" lengthAdjust="spacing">processing</text>
<path d="M696.40 428.00l4 3.6l-4 3.6z" fill="#555555" />
<rect x="708.30" y="424.20" width="14.40" height="15.40" fill="#ffffff" stroke="#c4c4c4" stroke-width="1" rx="1.2" />
<rect x="710.90" y="427.30" width="9.00" height="9.60" fill="url(#gsq)" stroke="#4a4a4a" stroke-width="1.1" rx="0.9" />
<path d="M732.30 431.00l4.7 4.9l5.4 -9.4" fill="none" stroke="#0b4da2" stroke-width="2.4" stroke-linecap="butt" stroke-linejoin="miter"/>
<text transform="translate(751.80 436.30) scale(0.9038 1)" font-size="12" textLength="23.44" lengthAdjust="spacing">Flow</text><text transform="translate(775.84 436.30) scale(0.9038 1)" font-size="12">-</text>
<text transform="translate(783.70 436.30) scale(1.0000 1)" font-size="12" textLength="132.60" lengthAdjust="spacing">-----------------------------</text>
<text transform="translate(920.00 436.30) scale(0.8029 1)" font-size="12" textLength="37.36" lengthAdjust="spacing">STACK</text>
<text transform="translate(953.80 436.30) scale(1.0000 1)" font-size="12" textLength="159.20" lengthAdjust="spacing">------------------------------------</text>
<line x1="678.00" y1="444.50" x2="1125.50" y2="444.50" stroke="#a8a8a8" stroke-width="1.2"/>
<rect x="1131.50" y="25.50" width="160.00" height="419.00" fill="#ffffff" stroke="#b9b9b9" stroke-width="1" />
<text transform="translate(1135.00 37.60) scale(0.9200 1)" font-size="12" textLength="33.24" lengthAdjust="spacing">Create</text><text transform="translate(1168.51 37.60) scale(0.9200 1)" font-size="12" textLength="55.26" lengthAdjust="spacing">expectable</text><text transform="translate(1222.28 37.60) scale(0.9200 1)" font-size="12" textLength="39.01" lengthAdjust="spacing">velocity</text><text transform="translate(1261.10 37.60) scale(0.9200 1)" font-size="12" textLength="22.18" lengthAdjust="spacing">moc</text>
<text transform="translate(1135.00 51.40) scale(0.8987 1)" font-size="12" textLength="33.65" lengthAdjust="spacing">Create</text><text transform="translate(1168.13 51.40) scale(0.8987 1)" font-size="12" textLength="29.39" lengthAdjust="spacing">offset</text><text transform="translate(1197.44 51.40) scale(0.8987 1)" font-size="12" textLength="35.39" lengthAdjust="spacing">classes</text><text transform="translate(1232.14 51.40) scale(0.8987 1)" font-size="12" textLength="20.35" lengthAdjust="spacing">fold</text><text transform="translate(1253.33 51.40) scale(0.8987 1)" font-size="12" textLength="28.01" lengthAdjust="spacing">maps</text>
<rect x="1132.00" y="431.00" width="150.00" height="13.00" fill="url(#gsb)" />
<line x1="1132.00" y1="430.90" x2="1280.00" y2="430.90" stroke="#d6d6d6" stroke-width="1.2"/>
<rect x="1144.40" y="431.50" width="130.00" height="12.30" fill="url(#gsb)" stroke="#d2d2d2" stroke-width="1" />
<line x1="1277.30" y1="431.50" x2="1277.30" y2="444.00" stroke="#d2d2d2" stroke-width="1"/>
<path d="M1139.4 433.8l-3.8 3.4l3.8 3.4z" fill="#4a4a4a" />
<rect x="1029.50" y="4.60" width="9.20" height="11.00" fill="#f8f8f8" stroke="#555" stroke-width="1" rx="1" />
<rect x="1031.30" y="6.60" width="2.20" height="1.60" fill="#444" />
<rect x="1034.70" y="6.60" width="2.20" height="1.60" fill="#444" />
<rect x="1031.30" y="9.60" width="2.20" height="1.60" fill="#444" />
<rect x="1034.70" y="9.60" width="2.20" height="1.60" fill="#444" />
<rect x="1031.30" y="12.60" width="2.20" height="1.60" fill="#444" />
<rect x="1034.70" y="12.60" width="2.20" height="1.60" fill="#444" />
<circle cx="1039.6" cy="15.6" r="4.6" fill="#0b4da2" stroke="#f0f0f0" stroke-width="0.8"/>
<path d="M1037 15.6h5.2M1039.6 13v5.2" fill="none" stroke="#fff" stroke-width="1.5" />
<rect x="1049.20" y="4.60" width="9.20" height="11.00" fill="#f8f8f8" stroke="#555" stroke-width="1" rx="1" />
<rect x="1051.00" y="6.60" width="2.20" height="1.60" fill="#444" />
<rect x="1054.40" y="6.60" width="2.20" height="1.60" fill="#444" />
<rect x="1051.00" y="9.60" width="2.20" height="1.60" fill="#444" />
<rect x="1054.40" y="9.60" width="2.20" height="1.60" fill="#444" />
<rect x="1051.00" y="12.60" width="2.20" height="1.60" fill="#444" />
<rect x="1054.40" y="12.60" width="2.20" height="1.60" fill="#444" />
<circle cx="1059.2" cy="15.4" r="4.6" fill="#ec6a1e" stroke="#f0f0f0" stroke-width="0.8"/>
<path d="M1056.6 15.4h5.2" fill="none" stroke="#fff" stroke-width="1.6" />
<path d="M1075.8 5l4.6 5.4h-2.8v4.6h-3.6v-4.6h-2.8z" fill="#0b4da2" />
<rect x="1068.80" y="17.20" width="2.40" height="2.60" fill="#222" />
<rect x="1072.80" y="17.20" width="10.40" height="2.60" fill="#222" />
<rect x="1088.00" y="4.80" width="2.40" height="2.60" fill="#222" />
<rect x="1092.00" y="4.80" width="10.60" height="2.60" fill="#222" />
<path d="M1095.4 19.8l-4.6 -5.4h2.8v-4.8h3.6v4.8h2.8z" fill="#0b4da2" />
<line x1="1109.00" y1="7.50" x2="1109.00" y2="17.00" stroke="#d4d4d4" stroke-width="1"/>
<path d="M1117 6.9l7.8 5.3l-7.8 5.3z" fill="#0b4da2" />
<rect x="1134.20" y="5.60" width="11.60" height="12.60" fill="none" stroke="#333" stroke-width="1.1" />
<path d="M1137.2 7.8l6.4 4.1l-6.4 4.1z" fill="#0b4da2" />
<path d="M1134.2 9.6l-1.4 1.8h2.8zM1145.8 15.2l-1.4 -1.8h2.8z" fill="#333" />
<rect x="1156.00" y="8.50" width="7.20" height="7.50" fill="#ec6a1e" />
<line x1="1172.50" y1="8.00" x2="1172.50" y2="17.00" stroke="#d4d4d4" stroke-width="1"/>
<rect x="1180.60" y="6.80" width="10.20" height="12.80" fill="#f4f4f4" stroke="#444" stroke-width="1" rx="1.2" />
<rect x="1178.60" y="4.90" width="10.20" height="12.80" fill="#f8f8f8" stroke="#444" stroke-width="1" rx="1.2" />
<rect x="1180.40" y="7.60" width="1.60" height="1.50" fill="#333" />
<rect x="1183.00" y="7.60" width="4.20" height="1.50" fill="#333" />
<rect x="1180.40" y="10.60" width="1.60" height="1.50" fill="#333" />
<rect x="1183.00" y="10.60" width="4.20" height="1.50" fill="#333" />
<rect x="1180.40" y="13.60" width="1.60" height="1.50" fill="#333" />
<rect x="1183.00" y="13.60" width="4.20" height="1.50" fill="#333" />
<rect x="1199.40" y="6.00" width="9.40" height="12.60" fill="#f6f6f6" stroke="#9a9a9a" stroke-width="1" rx="1.4" />
<rect x="1202.20" y="4.60" width="3.80" height="2.60" fill="#444" rx="0.8" />
<rect x="1217.00" y="10.40" width="10.60" height="9.00" fill="#f6f6f6" stroke="#333" stroke-width="1.2" />
<rect x="1216.40" y="9.80" width="11.80" height="2.60" fill="#222" />
<path d="M1222.8 5.6l2 2M1224.8 5.6l-2 2M1227.4 6.6l1.4 1.4M1229.2 9l1 1" fill="none" stroke="#1f5fc0" stroke-width="1.2" />
<path d="M1235.7 10.6h6.6l-3.3 3.5z" fill="#555" />
<line x1="1247.60" y1="8.00" x2="1247.60" y2="17.00" stroke="#d4d4d4" stroke-width="1"/>
<path d="M1257.8 8.2h3.6v5.4h1.2v1.2h-6v-1.2h1.2z" fill="#f4f4f4" stroke="#222" stroke-width="1" />
<path d="M1259.6 14.8v3.4" fill="none" stroke="#222" stroke-width="1.1" />
<rect x="1260.00" y="8.60" width="1.20" height="5.00" fill="#222" />
<rect x="1274.80" y="6.20" width="8.00" height="11.00" fill="#f0f0f0" stroke="#666" stroke-width="1.1" rx="2" />
<path d="M1277 12.4l3 -2" fill="none" stroke="#666" stroke-width="1" />
<rect x="780.50" y="447.00" width="74.00" height="19.40" fill="#e4e4e4" stroke="#c9c9c9" stroke-width="1" rx="1" />
<path d="M678.5 444.5V466.2q0 1.5 1.5 1.5H779q1.5 0 1.5 -1.5V444.5" fill="url(#gtab3)" stroke="#c4c4c4" stroke-width="1" />
<text transform="translate(688.30 461.40) scale(0.9418 1)" font-size="12" textLength="38.43" lengthAdjust="spacing">Module</text><text transform="translate(727.40 461.40) scale(0.9418 1)" font-size="12" textLength="44.49" lengthAdjust="spacing">Manager</text>
<text transform="translate(790.80 460.60) scale(0.8966 1)" font-size="12" textLength="31.69" lengthAdjust="spacing">Graph</text><text transform="translate(822.10 460.60) scale(0.8966 1)" font-size="12" textLength="24.76" lengthAdjust="spacing">View</text>
<rect x="678.00" y="470.00" width="602.00" height="6.00" fill="#e7e7e7" />
<line x1="780.50" y1="445.90" x2="1280.00" y2="445.90" stroke="#d8d8d8" stroke-width="1.3"/>
<text transform="translate(680.50 493.00) scale(0.9529 1)" font-size="11.5" font-weight="bold" textLength="39.98" lengthAdjust="spacing">Module</text><text transform="translate(721.66 493.00) scale(0.9529 1)" font-size="11.5" font-weight="bold" textLength="52.62" lengthAdjust="spacing">Properties</text>
<ellipse cx="1194.6" cy="482.6" rx="5" ry="2.3" fill="#f6f6f6" stroke="#444" stroke-width="1"/>
<path d="M1189.6 482.6v9.6a5 2.3 0 0 0 6 2.2M1199.6 482.6v3.4M1189.6 486a5 2.3 0 0 0 8 1.6M1189.6 489.4a5 2.3 0 0 0 5.4 2.2" fill="none" stroke="#444" stroke-width="1" />
<rect x="1195.60" y="487.80" width="7.40" height="7.60" fill="#333" rx="0.6" />
<rect x="1197.40" y="487.80" width="3.40" height="2.60" fill="#f0f0f0" />
<line x1="1209.00" y1="481.00" x2="1209.00" y2="494.00" stroke="#d4d4d4" stroke-width="1"/>
<path d="M1216.4 485.8l3.8 4.6l3.8 -4.6" fill="none" stroke="#444" stroke-width="1.1" />
<path d="M1238 484.2l4.8 3.9l-4.8 3.9" fill="none" stroke="#444" stroke-width="1.1" />
<path d="M1258 483.4h3.6v5.2h1.2v1.2h-6v-1.2h1.2z" fill="#f4f4f4" stroke="#222" stroke-width="1" />
<path d="M1259.8 489.8v3.4" fill="none" stroke="#222" stroke-width="1.1" />
<rect x="1260.20" y="483.80" width="1.20" height="4.80" fill="#222" />
<rect x="1274.80" y="482.00" width="8.00" height="11.00" fill="#f0f0f0" stroke="#666" stroke-width="1.1" rx="2" />
<path d="M1277 488.4l3 -2" fill="none" stroke="#666" stroke-width="1" />
<rect x="687.50" y="511.50" width="517.30" height="21.50" fill="#ffffff" stroke="#b4b4b4" stroke-width="1" rx="2" />
<text transform="translate(690.20 527.20) scale(0.8984 1)" font-size="12" font-style="italic" fill="#8a8a8a" textLength="34.82" lengthAdjust="spacing">Search</text><text transform="translate(724.40 527.20) scale(0.8984 1)" font-size="12" font-style="italic" fill="#8a8a8a" textLength="44.74" lengthAdjust="spacing">Property</text>
<rect x="1211.80" y="515.20" width="12.20" height="12.60" fill="#fafafa" stroke="#c4c4c4" stroke-width="1" rx="1" />
<text transform="translate(1229.00 525.80) scale(0.9064 1)" font-size="12" fill="#9a9a9a" textLength="50.97" lengthAdjust="spacing">Advanced</text>
<rect x="806.00" y="542.80" width="118.50" height="21.20" fill="#e2e2e2" stroke="#c9c9c9" stroke-width="1" rx="1" />
<rect x="924.50" y="542.80" width="119.90" height="21.20" fill="#e2e2e2" stroke="#c9c9c9" stroke-width="1" rx="1" />
<rect x="1044.40" y="542.80" width="118.60" height="21.20" fill="#e2e2e2" stroke="#c9c9c9" stroke-width="1" rx="1" />
<rect x="1163.00" y="542.80" width="121.00" height="21.20" fill="#e2e2e2" stroke="#c9c9c9" stroke-width="1" rx="1" />
<line x1="687.50" y1="564.20" x2="1280.00" y2="564.20" stroke="#c4c4c4" stroke-width="1"/>
<path d="M687.5 565V542q0 -1.6 1.6 -1.6H804.4q1.6 0 1.6 1.6V565" fill="url(#gtab2)" stroke="#c4c4c4" stroke-width="1" />
<rect x="688.10" y="563.00" width="117.30" height="2.40" fill="#f6f6f6" />
<text transform="translate(722.00 557.60) scale(0.9316 1)" font-size="12" textLength="26.09" lengthAdjust="spacing">Input</text><text transform="translate(749.16 557.60) scale(0.9316 1)" font-size="12" textLength="21.83" lengthAdjust="spacing">data</text>
<text transform="translate(839.00 558.20) scale(0.8778 1)" font-size="12" textLength="59.24" lengthAdjust="spacing">Parameters</text>
<text transform="translate(965.00 558.20) scale(0.9129 1)" font-size="12" textLength="41.41" lengthAdjust="spacing">Settings</text>
<text transform="translate(1074.60 558.20) scale(0.9383 1)" font-size="12" fill="#9d9d9d" textLength="35.14" lengthAdjust="spacing">Output</text><text transform="translate(1110.44 558.20) scale(0.9383 1)" font-size="12" fill="#9d9d9d" textLength="21.70" lengthAdjust="spacing">data</text>
<text transform="translate(1193.00 558.20) scale(0.9768 1)" font-size="12" fill="#9d9d9d" textLength="57.33" lengthAdjust="spacing">Information</text>
<rect x="688.10" y="565.00" width="592.00" height="7.50" fill="#f5f5f5" />
<rect x="687.50" y="572.50" width="600.00" height="160.00" fill="#ffffff" stroke="#c4c4c4" stroke-width="1" />
<rect x="688.00" y="573.00" width="592.00" height="17.60" fill="url(#ghead)" />
<line x1="688.00" y1="590.80" x2="1280.00" y2="590.80" stroke="#d2d2d2" stroke-width="1"/>
<line x1="855.70" y1="573.00" x2="855.70" y2="590.50" stroke="#d6d6d6" stroke-width="1"/>
<line x1="906.00" y1="573.00" x2="906.00" y2="590.50" stroke="#d6d6d6" stroke-width="1"/>
<text transform="translate(690.00 586.30) scale(0.9158 1)" font-size="12" textLength="30.57" lengthAdjust="spacing">Name</text>
<text transform="translate(857.90 586.30) scale(0.8570 1)" font-size="12" textLength="28.47" lengthAdjust="spacing">Value</text>
<text transform="translate(909.80 586.30) scale(0.8680 1)" font-size="12" textLength="52.88" lengthAdjust="spacing">Reference</text>
<rect x="710.60" y="591.00" width="570.00" height="19.00" fill="#ffff99" />
<text transform="translate(713.50 605.60) scale(0.8758 1)" font-size="12" textLength="32.29" lengthAdjust="spacing">SEG-Y</text><text transform="translate(744.68 605.60) scale(0.8758 1)" font-size="12" textLength="23.49" lengthAdjust="spacing">data</text><text transform="translate(768.14 605.60) scale(0.8758 1)" font-size="12" textLength="36.15" lengthAdjust="spacing">handle</text>
<text transform="translate(910.80 605.60) scale(0.8949 1)" font-size="12" textLength="51.51" lengthAdjust="spacing">Reference</text><text transform="translate(959.78 605.60) scale(0.8949 1)" font-size="12" textLength="10.88" lengthAdjust="spacing">to</text><text transform="translate(972.40 605.60) scale(0.8949 1)" font-size="12" textLength="34.15" lengthAdjust="spacing">&lt;Read</text><text transform="translate(1005.85 605.60) scale(0.8949 1)" font-size="12" textLength="37.39" lengthAdjust="spacing">seismic</text><text transform="translate(1042.19 605.60) scale(0.8949 1)" font-size="12" textLength="30.64" lengthAdjust="spacing">traces</text><text transform="translate(1072.49 605.60) scale(0.8949 1)" font-size="12">-</text><text transform="translate(1079.58 605.60) scale(0.8949 1)" font-size="12" textLength="37.39" lengthAdjust="spacing">seismic</text><text transform="translate(1115.92 605.60) scale(0.8949 1)" font-size="12" textLength="22.88" lengthAdjust="spacing">data</text><text transform="translate(1139.29 605.60) scale(0.8949 1)" font-size="12" textLength="23.18" lengthAdjust="spacing">set&gt;</text><text transform="translate(1162.91 605.60) scale(0.8949 1)" font-size="12">-</text><text transform="translate(1170.00 605.60) scale(0.8949 1)" font-size="12" textLength="116.21" lengthAdjust="spacing">&lt;GReadWriteSegyIte...</text>
<rect x="688.00" y="610.00" width="23.00" height="19.00" fill="#e8e6e3" />
<rect x="710.60" y="610.00" width="570.00" height="19.00" fill="#ffff99" />
<text transform="translate(713.50 624.60) scale(0.9133 1)" font-size="12" textLength="33.36" lengthAdjust="spacing">Sorted</text><text transform="translate(746.84 624.60) scale(0.9133 1)" font-size="12" textLength="39.85" lengthAdjust="spacing">headers</text><text transform="translate(786.09 624.60) scale(0.9133 1)" font-size="12" textLength="10.29" lengthAdjust="spacing">of</text><text transform="translate(798.35 624.60) scale(0.9133 1)" font-size="12" textLength="26.33" lengthAdjust="spacing">input</text><text transform="translate(825.27 624.60) scale(0.9133 1)" font-size="12" textLength="22.26" lengthAdjust="spacing">data</text>
<text transform="translate(910.80 624.60) scale(0.9011 1)" font-size="12" textLength="50.67" lengthAdjust="spacing">Reference</text><text transform="translate(959.32 624.60) scale(0.9011 1)" font-size="12" textLength="10.70" lengthAdjust="spacing">to</text><text transform="translate(971.82 624.60) scale(0.9011 1)" font-size="12" textLength="28.78" lengthAdjust="spacing">&lt;Sort</text><text transform="translate(1000.62 624.60) scale(0.9011 1)" font-size="12" textLength="38.06" lengthAdjust="spacing">traces&gt;</text><text transform="translate(1037.77 624.60) scale(0.9011 1)" font-size="12">-</text><text transform="translate(1044.79 624.60) scale(0.9011 1)" font-size="12" textLength="169.80" lengthAdjust="spacing">&lt;GGatherIndexVectorItem_OUT&gt;</text>
<rect x="710.60" y="629.00" width="570.00" height="19.00" fill="#ffff99" />
<text transform="translate(713.50 643.60) scale(0.9305 1)" font-size="12" textLength="25.68" lengthAdjust="spacing">Vrms</text><text transform="translate(740.30 643.60) scale(0.9305 1)" font-size="12" textLength="31.91" lengthAdjust="spacing">model</text>
<text transform="translate(910.80 643.60) scale(0.9308 1)" font-size="12" textLength="49.61" lengthAdjust="spacing">Reference</text><text transform="translate(959.87 643.60) scale(0.9308 1)" font-size="12" textLength="10.48" lengthAdjust="spacing">to</text><text transform="translate(972.51 643.60) scale(0.9308 1)" font-size="12" textLength="40.16" lengthAdjust="spacing">&lt;Create</text><text transform="translate(1012.78 643.60) scale(0.9308 1)" font-size="12" textLength="38.03" lengthAdjust="spacing">velocity</text><text transform="translate(1051.07 643.60) scale(0.9308 1)" font-size="12" textLength="39.48" lengthAdjust="spacing">model&gt;</text><text transform="translate(1090.71 643.60) scale(0.9308 1)" font-size="12">-</text><text transform="translate(1097.81 643.60) scale(0.9308 1)" font-size="12" textLength="158.99" lengthAdjust="spacing">&lt;GVelocityModelAbstractItem&gt;</text>
<rect x="688.00" y="648.00" width="23.00" height="19.00" fill="#e8e6e3" />
<rect x="710.60" y="648.00" width="570.00" height="19.00" fill="#ffff99" />
<text transform="translate(713.50 662.60) scale(0.9570 1)" font-size="12" textLength="35.04" lengthAdjust="spacing">Output</text><text transform="translate(749.95 662.60) scale(0.9570 1)" font-size="12" textLength="47.28" lengthAdjust="spacing">geometry</text>
<text transform="translate(910.80 662.60) scale(0.8947 1)" font-size="12" textLength="51.48" lengthAdjust="spacing">Reference</text><text transform="translate(959.74 662.60) scale(0.8947 1)" font-size="12" textLength="10.87" lengthAdjust="spacing">to</text><text transform="translate(972.35 662.60) scale(0.8947 1)" font-size="12" textLength="34.13" lengthAdjust="spacing">&lt;Read</text><text transform="translate(1005.77 662.60) scale(0.8947 1)" font-size="12" textLength="37.36" lengthAdjust="spacing">seismic</text><text transform="translate(1042.08 662.60) scale(0.8947 1)" font-size="12" textLength="30.62" lengthAdjust="spacing">traces</text><text transform="translate(1072.36 662.60) scale(0.8947 1)" font-size="12">-</text><text transform="translate(1079.45 662.60) scale(0.8947 1)" font-size="12" textLength="37.36" lengthAdjust="spacing">seismic</text><text transform="translate(1115.76 662.60) scale(0.8947 1)" font-size="12" textLength="22.87" lengthAdjust="spacing">data</text><text transform="translate(1139.10 662.60) scale(0.8947 1)" font-size="12" textLength="23.16" lengthAdjust="spacing">set&gt;</text><text transform="translate(1162.71 662.60) scale(0.8947 1)" font-size="12">-</text><text transform="translate(1169.79 662.60) scale(0.8947 1)" font-size="12" textLength="122.51" lengthAdjust="spacing">&lt;GTraceVectorItem_O...</text>
<rect x="688.00" y="667.00" width="592.00" height="19.00" fill="#f0f0f0" />
<text transform="translate(713.50 681.60) scale(0.9183 1)" font-size="12" textLength="26.55" lengthAdjust="spacing">Input</text><text transform="translate(740.76 681.60) scale(0.9183 1)" font-size="12" textLength="16.12" lengthAdjust="spacing">VTI</text><text transform="translate(758.43 681.60) scale(0.9183 1)" font-size="12" textLength="31.98" lengthAdjust="spacing">model</text>
<text transform="translate(910.80 681.60) scale(0.9196 1)" font-size="12" textLength="50.05" lengthAdjust="spacing">Reference</text><text transform="translate(959.70 681.60) scale(0.9196 1)" font-size="12" textLength="10.57" lengthAdjust="spacing">to</text><text transform="translate(972.30 681.60) scale(0.9196 1)" font-size="12" textLength="36.54" lengthAdjust="spacing">&lt;PSTM</text><text transform="translate(1008.77 681.60) scale(0.9196 1)" font-size="12" textLength="48.93" lengthAdjust="spacing">imaging&gt;</text><text transform="translate(1056.64 681.60) scale(0.9196 1)" font-size="12">-</text><text transform="translate(1063.73 681.60) scale(0.9196 1)" font-size="12" textLength="159.83" lengthAdjust="spacing">&lt;GVerticalVelocityPickingItem&gt;</text>
<rect x="688.00" y="686.00" width="592.00" height="19.00" fill="#e8e6e3" />
<text transform="translate(713.50 700.60) scale(0.9215 1)" font-size="12" textLength="54.15" lengthAdjust="spacing">Dimension</text>
<text transform="translate(910.80 700.60) scale(0.8000 1)" font-size="12" textLength="25.06" lengthAdjust="spacing">NOT</text><text transform="translate(933.56 700.60) scale(0.8000 1)" font-size="12" textLength="19.31" lengthAdjust="spacing">SET</text>
<text transform="translate(713.50 719.60) scale(0.8912 1)" font-size="12" textLength="13.36" lengthAdjust="spacing">V0</text><text transform="translate(728.22 719.60) scale(0.8912 1)" font-size="12" textLength="22.98" lengthAdjust="spacing">Map</text>
<text transform="translate(910.80 719.60) scale(0.8000 1)" font-size="12" textLength="25.06" lengthAdjust="spacing">NOT</text><text transform="translate(933.56 719.60) scale(0.8000 1)" font-size="12" textLength="19.31" lengthAdjust="spacing">SET</text>
<text transform="translate(860.30 698.60) scale(0.8326 1)" font-size="12" textLength="14.65" lengthAdjust="spacing">3D</text>
<path d="M894 692.2h6.8l-3.4 3.6z" fill="#222" />
<rect x="674.10" y="0.00" width="18.00" height="720.00" fill="url(#gshadow)" />
</g>
<g id="annotations" fill="#000">
<rect x="682.75" y="268.70" width="255.75" height="23.55" fill="none" stroke="#ed1c24" stroke-width="3.0" />
<rect x="689.00" y="665.60" width="538.40" height="22.60" fill="none" stroke="#ed1c24" stroke-width="3.0" />
<rect x="46.50" y="290.50" width="277.00" height="16.90" fill="none" stroke="#ed1c24" stroke-width="3.0" />
<rect x="398.80" y="115.60" width="151.70" height="17.60" fill="none" stroke="#ed1c24" stroke-width="3.0" />
<path d="M955.7 264.25h4.4v13.9h2.9v2.6h-11v-2.6h3.7v-9.6l-3.1 1.9l-0.5 -3.0z" fill="#000" />
<text transform="translate(1242.40 684.90) scale(0.9000 1)" font-size="23.5" font-weight="bold">2</text>
<text transform="translate(337.20 303.90) scale(0.9000 1)" font-size="23.5" font-weight="bold">3</text>
<text transform="translate(570.70 133.80) scale(0.9000 1)" font-size="23.5" font-weight="bold">4</text>
<path d="M715.4 146.0C713.5 144.7 707.8 140.7 703.8 138.1C699.7 135.5 695.2 132.7 691.2 130.6C687.3 128.5 683.8 126.8 680.0 125.6C676.2 124.4 672.1 123.7 668.8 123.5C665.4 123.3 662.9 123.5 660.0 124.4C657.1 125.3 653.8 127.0 651.2 128.8C648.8 130.5 647.0 132.3 645.0 135.0C643.0 137.7 641.0 141.2 639.4 145.0C637.8 148.8 636.8 152.9 635.6 157.5C634.5 162.1 633.4 167.1 632.5 172.5C631.6 177.9 630.6 185.4 630.0 190.0C629.4 194.6 629.4 192.8 628.9 200.0C628.4 207.2 627.2 221.8 626.7 233.0C626.2 244.2 625.9 254.0 625.6 267.0C625.3 280.0 625.0 295.5 624.9 311.0C624.8 326.5 624.7 340.2 624.8 360.0C624.9 379.8 625.1 408.3 625.6 430.0C626.1 451.7 626.8 471.7 627.5 490.0C628.2 508.3 629.2 523.3 630.0 540.0C630.8 556.7 631.2 575.4 632.5 590.0C633.8 604.6 635.0 617.1 637.5 627.5C640.0 637.9 643.8 646.7 647.5 652.5C651.2 658.3 655.4 661.7 660.0 662.5C664.6 663.3 669.6 660.8 675.0 657.5C680.4 654.2 686.9 646.5 692.5 642.5C698.1 638.5 706.0 635.2 708.8 633.8" fill="none" stroke="#00b050" stroke-width="2.7" stroke-linecap="butt"/>
<path d="M712.3 355.0C708.2 359.8 693.9 375.5 687.5 383.8C681.1 392.1 677.6 397.6 673.8 405.0C670.0 412.4 666.8 420.5 664.5 428.0C662.2 435.5 660.4 443.0 659.8 450.0C659.2 457.0 659.4 462.0 661.0 470.0C662.6 478.0 665.8 488.5 669.2 497.8C672.7 507.1 677.3 516.4 681.7 525.6C686.1 534.9 691.7 545.0 695.6 553.3C699.5 561.6 702.8 568.9 705.3 575.6C707.8 582.3 709.7 589.2 710.8 593.6C711.9 598.0 711.6 600.6 711.8 602.0" fill="none" stroke="#ff0000" stroke-width="2.8" stroke-linecap="butt"/>
<path d="M894.2 354.2C896.2 356.5 901.9 362.3 906.0 367.8C910.1 373.3 914.6 380.3 918.6 387.2C922.6 394.1 926.6 402.0 929.7 409.4C932.8 416.8 935.5 424.8 937.2 431.7C939.0 438.6 940.1 444.5 940.2 451.0C940.3 457.5 939.4 463.6 938.0 470.6C936.6 477.6 934.5 485.9 931.7 492.8C928.9 499.7 924.8 506.0 921.4 512.2C918.0 518.4 915.6 523.5 911.5 530.0C907.4 536.5 902.3 544.1 896.6 551.4C890.9 558.7 883.7 566.4 877.2 573.7C870.7 581.0 864.2 588.0 857.7 595.0C851.2 602.0 844.8 608.5 838.3 615.5C831.8 622.5 825.4 629.8 818.9 637.0C812.4 644.2 802.3 655.1 799.0 658.7" fill="none" stroke="#376a9c" stroke-width="3.0" stroke-linecap="butt"/>
<path d="M1008.6 371.5C1012.5 374.0 1024.6 381.6 1031.7 386.4C1038.8 391.2 1045.5 395.7 1051.1 400.3C1056.6 404.9 1061.4 409.6 1065.0 414.2C1068.6 418.8 1071.1 423.6 1072.8 428.0C1074.5 432.4 1075.0 436.4 1075.0 440.6C1075.0 444.8 1074.2 448.6 1072.8 453.0C1071.4 457.4 1069.1 462.6 1066.4 467.0C1063.7 471.4 1060.6 475.0 1056.7 479.4C1052.8 483.8 1048.4 488.2 1042.8 493.3C1037.2 498.4 1029.8 504.7 1023.3 510.0C1016.8 515.3 1010.9 519.9 1003.9 525.3C996.9 530.7 989.1 536.2 981.0 542.3C972.9 548.4 963.2 556.0 955.0 562.0C946.8 568.0 939.4 573.3 931.6 578.6C923.8 583.9 915.4 589.5 908.3 594.0C901.2 598.5 895.6 602.0 888.8 605.8C882.0 609.5 873.0 614.0 867.5 616.5C862.0 619.0 859.1 620.0 855.8 621.0C852.5 622.0 849.0 622.2 847.6 622.5" fill="none" stroke="#00b0f0" stroke-width="3.0" stroke-linecap="butt"/>
</g>
</svg>
</body></html>
